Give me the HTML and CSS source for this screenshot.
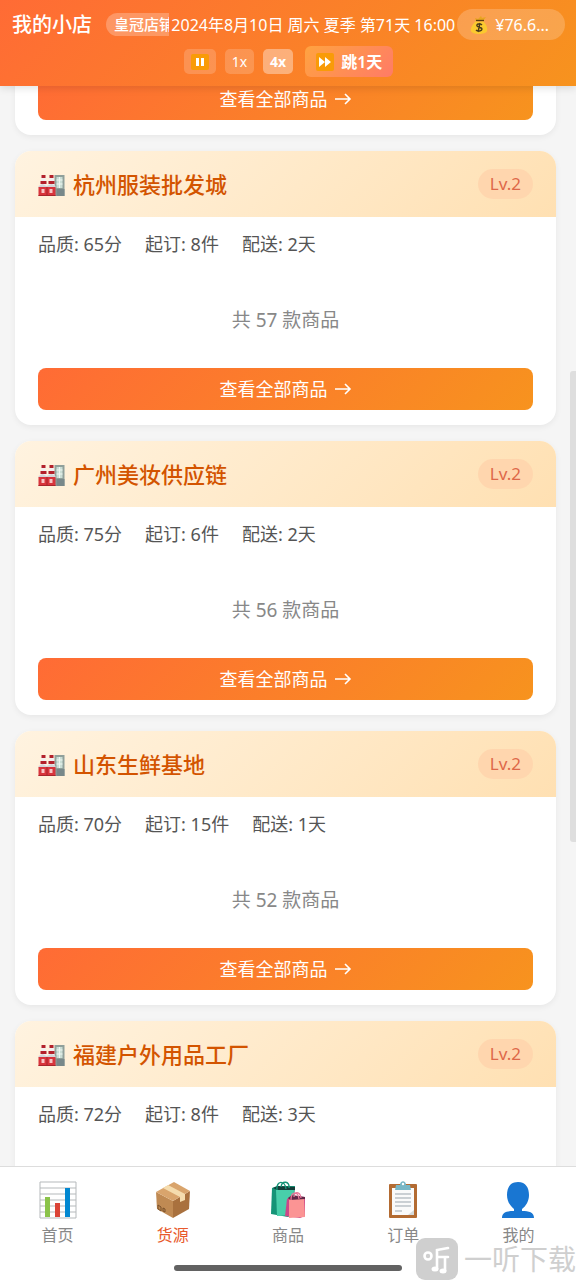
FILE: index.html
```html
<!DOCTYPE html>
<html lang="zh-CN">
<head>
<meta charset="utf-8">
<meta name="viewport" content="width=device-width, initial-scale=1">
<title>我的小店</title>
<link rel="stylesheet" href="styles.css">
</head>
<body>
<svg class="sprite" aria-hidden="true">
  <symbol id="factory" viewBox="0 0 26 24">
    <path fill="#90a09b" d="M16 1h10v21H16z"/><path fill="#c9ddd5" d="M18 3h6v11h-6z"/><path fill="#78888a" d="M18 15h8v7h-8z"/><path stroke="#eef6f1" d="M18 6h6M18 10h6M21 3v11"/>
    <path fill="#f3efef" d="M3 1h4l1 12H2zM11 1h4l1 12h-6z"/>
    <path fill="#b3202a" d="M3 1h4v3H3zM11 1h4v3h-4zM2 7h6v3H2zM10 7h6v3h-6z"/>
    <path fill="#d5d5d8" d="M0 12l4-2 4 2 5-2 4 2v2H0z"/><path fill="#d8343c" d="M0 13h17v9H0z"/><path fill="#f6c4c4" d="M3 15h3v4H3zM11 15h3v4h-3z"/><path fill="#a8252c" d="M0 21h17v1H0zM8 13h1v9H8z"/>
  </symbol>
</svg>
<div class="app">
  <header class="topbar">
    <div class="status">
      <div class="shop"><h1>我的小店</h1><span class="rank">皇冠店铺</span></div>
      <time class="date">2024年8月10日 周六 夏季 第71天 16:00</time>
      <div class="money">
        <svg class="bag" viewBox="0 0 18 18" aria-hidden="true"><path fill="#fbc92f" d="M6 5c2 1 5 1 7 0 3 3 5 7 4 10-1 4-15 4-16 0-1-3 2-7 5-10z"/><path fill="#e7a51f" d="M5 2l3 1 3-3 1 2 4-1-3 4H6z"/><path stroke="#5e3c0c" stroke-width="1.3" d="M6 4.500h8"/><path fill="none" stroke="#4b3a1a" stroke-width="1.4" d="M12 9c-2-2-6-1-5 1s5 1 5 3-4 3-6 1M10 7l-2 9"/></svg>
        <span>¥76.6...</span>
      </div>
    </div>
    <div class="controls">
      <button class="speed" aria-label="暂停"><svg class="glyph" viewBox="0 0 18 18" aria-hidden="true"><rect y="1" width="18" height="16" rx="2" fill="#f99b08"/><path fill="#fff" d="M5 5h3v8H5zM10 5h3v8h-3z"/></svg></button>
      <button class="speed">1x</button>
      <button class="speed active">4x</button>
      <button class="skip"><svg class="glyph" viewBox="0 0 18 18" aria-hidden="true"><rect width="18" height="18" rx="2" fill="#f99b08"/><path fill="#fff" d="M3 4l6 5-6 5zM9 4l6 5-6 5z"/></svg>跳1天</button>
    </div>
  </header>

  <main class="content">
    <div class="list">
      <article class="card">
        <div class="card-head"><svg class="factory"><use href="#factory"/></svg><h2>义乌小商品城</h2><span class="level">Lv.2</span></div>
        <div class="card-body"><div class="facts"><span>品质: 60分</span><span>起订: 5件</span><span>配送: 2天</span></div><p class="count">共 50 款商品</p><button class="view">查看全部商品 <svg class="arrow" viewBox="0 0 18 14" aria-hidden="true"><path d="M1 7h15M11 2l5 5-5 5"/></svg></button></div>
      </article>
      <article class="card">
        <div class="card-head"><svg class="factory"><use href="#factory"/></svg><h2>杭州服装批发城</h2><span class="level">Lv.2</span></div>
        <div class="card-body"><div class="facts"><span>品质: 65分</span><span>起订: 8件</span><span>配送: 2天</span></div><p class="count">共 57 款商品</p><button class="view">查看全部商品 <svg class="arrow" viewBox="0 0 18 14" aria-hidden="true"><path d="M1 7h15M11 2l5 5-5 5"/></svg></button></div>
      </article>
      <article class="card">
        <div class="card-head"><svg class="factory"><use href="#factory"/></svg><h2>广州美妆供应链</h2><span class="level">Lv.2</span></div>
        <div class="card-body"><div class="facts"><span>品质: 75分</span><span>起订: 6件</span><span>配送: 2天</span></div><p class="count">共 56 款商品</p><button class="view">查看全部商品 <svg class="arrow" viewBox="0 0 18 14" aria-hidden="true"><path d="M1 7h15M11 2l5 5-5 5"/></svg></button></div>
      </article>
      <article class="card">
        <div class="card-head"><svg class="factory"><use href="#factory"/></svg><h2>山东生鲜基地</h2><span class="level">Lv.2</span></div>
        <div class="card-body"><div class="facts"><span>品质: 70分</span><span>起订: 15件</span><span>配送: 1天</span></div><p class="count">共 52 款商品</p><button class="view">查看全部商品 <svg class="arrow" viewBox="0 0 18 14" aria-hidden="true"><path d="M1 7h15M11 2l5 5-5 5"/></svg></button></div>
      </article>
      <article class="card">
        <div class="card-head"><svg class="factory"><use href="#factory"/></svg><h2>福建户外用品工厂</h2><span class="level">Lv.2</span></div>
        <div class="card-body"><div class="facts"><span>品质: 72分</span><span>起订: 8件</span><span>配送: 3天</span></div><p class="count">共 50 款商品</p><button class="view">查看全部商品 <svg class="arrow" viewBox="0 0 18 14" aria-hidden="true"><path d="M1 7h15M11 2l5 5-5 5"/></svg></button></div>
      </article>
    </div>
    <div class="scroll-thumb"></div>
  </main>

  <nav class="tabs">
    <a href="#home"><svg viewBox="0 0 38 38" aria-hidden="true"><path fill="#fff" stroke="#b5b9bb" d="M1 1h36v36H1z"/><path stroke="#b5b9bb" d="M1 7h36M1 13h36M1 19h36M1 25h36M1 31h36"/><path fill="#8bc34a" d="M6 16h5v20H6z"/><path fill="#db4437" d="M16 22h5v14h-5z"/><path fill="#0288d1" d="M26 7h5v29h-5z"/></svg>首页</a>
    <a href="#supply" class="current"><svg viewBox="0 0 38 38" aria-hidden="true"><path fill="#c08a53" d="M2 11l17 9v17L3 28z"/><path fill="#a9713e" d="M19 20l17-10-1 18-16 9z"/><path fill="#d9a46c" d="M2 11L20 1l16 9-17 10z"/><path fill="#f5dcae" d="M9 7l5-3 17 9v6l-5 2v-5z"/><path fill="none" stroke="#79502b" d="M4 24l3 2v4l-3-2zM9 27l2 1v3l-2-1z"/></svg>货源</a>
    <a href="#goods"><svg viewBox="0 0 38 38" aria-hidden="true"><path fill="#159477" d="M3 7l5-2h18l-2 28-5 3L2 33z"/><path fill="#48cfaa" d="M7 9l18-2-1 27-16 1z"/><path fill="#143d38" d="M4 7l5-2 17 1v3L8 9z"/><path fill="none" stroke="#159477" stroke-width="1.4" d="M8 9C7-1 16-1 17 8M12 6c1-7 9-6 8 1"/><path fill="#cc4789" d="M18 18l4-3 14 1v19l-5 2-15-2z"/><path fill="#fb9494" d="M20 18l15-1 1 19-16 1z"/><path fill="#612748" d="M19 17l4-3 13 2v2l-15 1z"/><path fill="none" stroke="#e8779a" stroke-width="1.3" d="M22 19c0-9 7-9 8-1M25 16c0-6 6-6 7 1"/></svg>商品</a>
    <a href="#orders"><svg viewBox="0 0 38 38" aria-hidden="true"><rect x="5" y="3" width="28" height="34" rx="1" fill="#b36b32"/><path fill="#fafafa" d="M8 7h22v27H8z"/><path fill="#d4d9da" d="M24 34l6-5v5z"/><path stroke="#9ba5ad" d="M11 13h16M11 17h16M11 21h16M11 25h16M11 30h7"/><path fill="#78b7c6" d="M12 4h4c0-5 6-5 6 0h4l1 5H11z"/><circle cx="19" cy="3" r="1.2" fill="#fff"/></svg>订单</a>
    <a href="#me"><svg viewBox="0 0 38 38" aria-hidden="true"><path fill="#1976d2" d="M19 1C11 1 8 7 8 14c0 6 3 11 7 14v2C8 30 3 31 3 37h32c0-6-5-7-12-7v-2c4-3 7-8 7-14 0-7-3-13-11-13z"/></svg>我的</a>
  </nav>
  <div class="home-bar"></div>
  <div class="watermark"><svg viewBox="0 0 42 42" aria-hidden="true"><rect width="42" height="42" rx="9" fill="#cfcfcf"/><g fill="none" stroke="#fff" stroke-width="2.600" stroke-linecap="round"><circle cx="12" cy="18" r="3.500"/><path d="M32 10l-11 2v19M21 19h11M29 19v14"/></g><g fill="#fff"><ellipse cx="19" cy="31" rx="3.500" ry="2.500"/><ellipse cx="27" cy="33" rx="3.500" ry="2.500"/></g></svg><span>一听下载</span></div>
</div>
</body>
</html>
```
FILE: styles.css
```css
* { box-sizing: border-box; }
body {
  margin: 0;
  background: #f5f5f5;
  font-family: "Noto Sans", "Noto Sans CJK SC", sans-serif;
  line-height: 24px;
  color: #555;
}
h1, h2, p { margin: 0; }
button { border: 0; font: inherit; color: #fff; padding: 0; }
.sprite { display: none; }
.app { position: relative; height: 100vh; display: flex; flex-direction: column; overflow: hidden; }

.topbar {
  position: relative;
  z-index: 2;
  flex: none;
  padding: 9px 11px 9px 12px;
  background: linear-gradient(135deg, #ff6b35, #f7931e);
  box-shadow: 0 2px 8px rgba(0, 0, 0, .12);
  color: #fff;
}
.status { display: flex; align-items: center; height: 31px; white-space: nowrap; }
.shop { flex: 1; min-width: 0; display: flex; align-items: center; gap: 14px; overflow: hidden; }
.shop h1 { flex: none; font-size: 20px; font-weight: 500; line-height: 28px; }
.rank { flex: none; padding: 0 8px; border-radius: 12px; background: rgba(255, 255, 255, .25); font-size: 15px; font-weight: 500; line-height: 23px; }
.date { padding: 0 2px; font-size: 16px; }
.money { display: flex; align-items: center; gap: 7px; height: 31px; padding: 0 16px 0 13px; border-radius: 16px; background: rgba(255, 255, 255, .2); font-size: 16px; }
.bag { width: 18px; height: 18px; }
.controls { display: flex; justify-content: center; align-items: center; gap: 9px; margin-top: 6px; }
.speed { height: 25px; padding: 0 7px; border-radius: 5px; background: rgba(255, 255, 255, .18); font-size: 14px; display: flex; align-items: center; }
.speed.active { background: rgba(255, 255, 255, .38); font-weight: 700; }
.skip { display: flex; align-items: center; gap: 7px; height: 31px; margin-left: 3px; padding: 0 11px; border-radius: 6px; background: linear-gradient(135deg, #ffa340, #ff7b67); font-size: 16px; font-weight: 600; }
.glyph { width: 18px; height: 18px; }

.content { position: relative; flex: 1; min-height: 0; overflow: hidden; }
.list { display: flex; flex-direction: column; gap: 16px; margin-top: -225px; padding: 0 20px 0 15px; }
.card { border-radius: 16px; overflow: hidden; background: #fff; box-shadow: 0 2px 6px rgba(0, 0, 0, .06); }
.card-head { display: flex; align-items: center; gap: 8px; height: 66px; padding: 0 23px; background: linear-gradient(135deg, #fff3e0, #ffe0b2); }
.card-head h2 { flex: 1; font-size: 22px; font-weight: 500; line-height: 32px; color: #d35400; }
.factory { width: 27px; height: 24px; margin-top: 4px; }
.level { padding: 0 12px; border-radius: 15px; background: #ffd6ae; color: #de6849; font-size: 17px; line-height: 30px; }
.card-body { padding: 14px 23px 15px; }
.facts { display: flex; gap: 23px; font-size: 18px; line-height: 26px; }
.count { padding: 49px 0 34px; text-align: center; color: #888; font-size: 19px; line-height: 28px; }
.view { display: flex; justify-content: center; align-items: center; gap: 6px; width: 100%; height: 42px; border-radius: 8px; background: linear-gradient(135deg, #ff6b35, #f7931e); font-size: 18px; }
.arrow { width: 18px; height: 14px; fill: none; stroke: #fff; stroke-width: 1.6; }
.scroll-thumb { position: absolute; right: 0; top: 26.4%; width: 6px; height: 43.6%; border-radius: 3px 0 0 3px; background: #dedede; }

.tabs { flex: none; display: grid; grid-template-columns: repeat(5, 1fr); height: 114px; padding-top: 14px; background: #fff; border-top: 1px solid #ddd; }
.tabs a { display: flex; flex-direction: column; align-items: center; gap: 4px; color: #888; font-size: 16px; line-height: 24px; text-decoration: none; }
.tabs svg { width: 38px; height: 38px; }
.tabs .current { color: #e8592c; }
.home-bar { position: absolute; bottom: 9px; left: 50%; width: 228px; height: 6px; margin-left: -114px; border-radius: 3px; background: #626262; }
.watermark { position: absolute; right: 0; bottom: 0; display: flex; align-items: center; gap: 6px; color: #cfcfcf; font-size: 28px; line-height: 42px; }
.watermark svg { width: 42px; height: 42px; }
```
